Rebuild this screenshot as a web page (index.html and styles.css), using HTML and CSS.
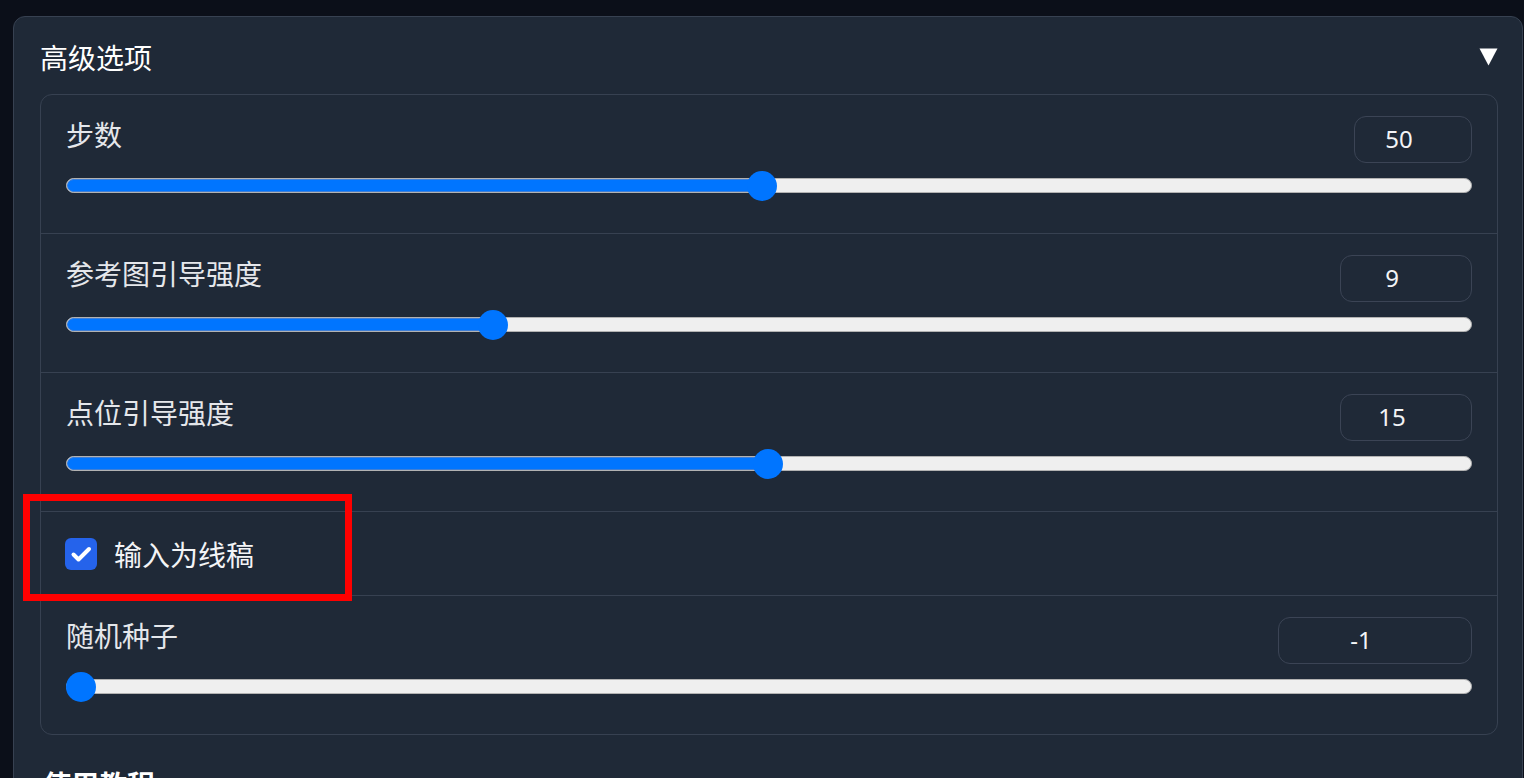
FILE: index.html
```html
<!DOCTYPE html>
<html lang="zh-CN">
<head>
<meta charset="utf-8">
<title>高级选项</title>
<link rel="stylesheet" href="styles.css">
</head>
<body>
<div class="page">
  <section class="panel">
    <div class="panel-head">
      <span class="panel-title">高级选项</span>
      <svg class="caret" width="19" height="18" viewBox="0 0 19 18"><polygon points="0.5,0.5 18.5,0.5 9.5,17.5" fill="#ffffff"/></svg>
    </div>
    <div class="group">
      <div class="row">
        <div class="row-top">
          <span class="label">步数</span>
          <div class="num num-w118">50</div>
        </div>
        <div class="slider" style="--p:0.495">
          <div class="track"><div class="fill"></div></div>
          <div class="thumb"></div>
        </div>
      </div>
      <div class="row">
        <div class="row-top">
          <span class="label">参考图引导强度</span>
          <div class="num num-w132">9</div>
        </div>
        <div class="slider" style="--p:0.2994">
          <div class="track"><div class="fill"></div></div>
          <div class="thumb"></div>
        </div>
      </div>
      <div class="row">
        <div class="row-top">
          <span class="label">点位引导强度</span>
          <div class="num num-w132">15</div>
        </div>
        <div class="slider" style="--p:0.4993">
          <div class="track"><div class="fill"></div></div>
          <div class="thumb"></div>
        </div>
      </div>
      <div class="row row-check">
        <label class="check">
          <span class="box"><svg width="32" height="32" viewBox="0 0 32 32"><path d="M8.5 16.5 L13.5 21.5 L24 11" fill="none" stroke="#ffffff" stroke-width="4" stroke-linecap="round" stroke-linejoin="round"/></svg></span>
          <span class="check-text">输入为线稿</span>
        </label>
        <div class="highlight"></div>
      </div>
      <div class="row">
        <div class="row-top">
          <span class="label">随机种子</span>
          <div class="num num-w194">-1</div>
        </div>
        <div class="slider" style="--p:0">
          <div class="track"><div class="fill"></div></div>
          <div class="thumb"></div>
        </div>
      </div>
    </div>
    <div class="next-title">使用教程</div>
  </section>
</div>
</body>
</html>
```
FILE: styles.css
```css
html, body {
  margin: 0;
  padding: 0;
  background: #0b0f19;
  height: 778px;
  overflow: hidden;
}
body {
  font-family: "Noto Sans", "Noto Sans CJK SC", sans-serif;
  color: #e5e7eb;
}
.page {
  padding: 16px 1px 0 13px;
}
.panel {
  background: #1f2937;
  border: 1px solid #374151;
  border-radius: 12px;
  padding: 20px 24px 40px 26px;
}
.panel-head {
  display: flex;
  justify-content: space-between;
  align-items: center;
  height: 40px;
}
.panel-title {
  font-family: "Noto Sans CJK SC", sans-serif;
  font-size: 28px;
  line-height: 40px;
  color: #ffffff;
}
.caret {
  display: block;
}
.group {
  margin-top: 17px;
  border: 1px solid #374151;
  border-radius: 12px;
}
.row {
  padding: 21px 25px 32px 25px;
  border-top: 1px solid #374151;
}
.row:first-child {
  border-top: none;
}
.row-top {
  display: flex;
  justify-content: space-between;
  align-items: flex-start;
  height: 47px;
}
.label {
  font-family: "Noto Sans CJK SC", sans-serif;
  font-size: 28px;
  line-height: 36px;
  color: #e5e7eb;
}
.num {
  box-sizing: border-box;
  height: 47px;
  border: 1.5px solid #3b4455;
  border-radius: 12px;
  font-size: 24px;
  line-height: 44px;
  text-align: center;
  padding-right: 28px;
  color: #f3f4f6;
}
.num-w118 { width: 118px; }
.num-w132 { width: 132px; }
.num-w194 { width: 194px; }
.slider {
  position: relative;
  margin-top: 8px;
  height: 30px;
}
.track {
  position: absolute;
  left: 0;
  right: 0;
  top: 7px;
  height: 15px;
  box-sizing: border-box;
  background: #efefef;
  border: 1px solid #b2b2b2;
  border-radius: 8px;
  overflow: hidden;
}
.fill {
  position: absolute;
  left: 0;
  top: 0;
  bottom: 0;
  width: calc(var(--p) * (100% - 30px) + 15px);
  background: #0075ff;
  box-shadow: inset 0 0 0 1px #3f7fd6;
  border-radius: 8px 0 0 8px;
}
.thumb {
  position: absolute;
  top: 0;
  left: calc(var(--p) * (100% - 30px));
  width: 30px;
  height: 30px;
  border-radius: 50%;
  background: #0075ff;
}
.row-check {
  position: relative;
  height: 83px;
  padding: 0 25px 0 24px;
  display: flex;
  align-items: center;
}
.check {
  display: flex;
  align-items: center;
  gap: 17px;
}
.box {
  width: 32px;
  height: 32px;
  border-radius: 6px;
  background: #2563eb;
  display: block;
}
.box svg {
  display: block;
}
.check-text {
  font-family: "Noto Sans CJK SC", sans-serif;
  font-size: 28px;
  line-height: 36px;
  color: #f3f4f6;
}
.highlight {
  position: absolute;
  left: -18px;
  top: -18px;
  width: 329px;
  height: 107px;
  box-sizing: border-box;
  border: 7px solid #ff0000;
  pointer-events: none;
}
.next-title {
  margin-top: 29px;
  margin-left: 3px;
  font-family: "Noto Sans CJK SC", sans-serif;
  font-weight: 700;
  font-size: 28px;
  line-height: 40px;
  color: #ffffff;
}
```
